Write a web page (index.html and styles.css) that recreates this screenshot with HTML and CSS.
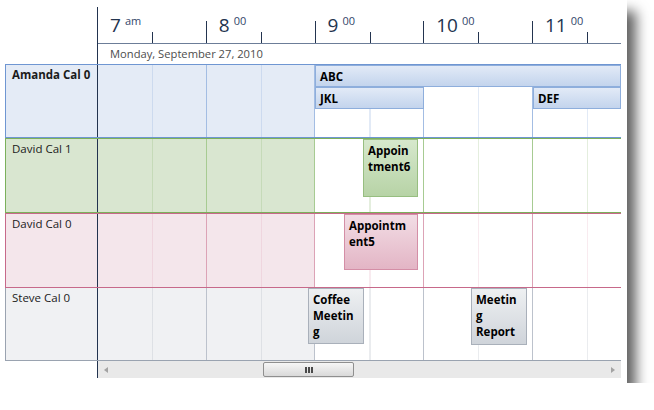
FILE: index.html
```html
<!DOCTYPE html>
<html>
<head>
    <meta name="viewport" content="width=device-width, initial-scale=1">
    <title>Scheduler</title>
    <link rel="stylesheet" href="styles.css">
</head>
<body>
    <div class="window">
        <div class="scheduler">
            <div class="band">
                <div class="corner"></div>
                <div class="ruler-wrap">
                    <div class="ruler">
                        <div class="hour"><span class="num">7</span><sup>am</sup></div>
                        <div class="hour"><span class="num">8</span><sup>00</sup></div>
                        <div class="hour"><span class="num">9</span><sup>00</sup></div>
                        <div class="hour"><span class="num">10</span><sup>00</sup></div>
                        <div class="hour"><span class="num">11</span><sup>00</sup></div>
                    </div>
                    <div class="date">Monday, September 27, 2010</div>
                </div>
            </div>

            <div class="row blue">
                <div class="row-head"><b>Amanda Cal 0</b></div>
                <div class="lane">
                    <div class="appt" style="left: 217px; top: 0; width: 306px; height: 22px;">ABC</div>
                    <div class="appt" style="left: 217px; top: 22px; width: 109px; height: 22px;">JKL</div>
                    <div class="appt" style="left: 435px; top: 22px; width: 88px; height: 22px;">DEF</div>
                </div>
            </div>

            <div class="row green">
                <div class="row-head">David Cal 1</div>
                <div class="lane">
                    <div class="appt" style="left: 265px; top: 0; width: 55px; height: 58px;">Appoin<br>tment6</div>
                </div>
            </div>

            <div class="row pink">
                <div class="row-head">David Cal 0</div>
                <div class="lane">
                    <div class="appt" style="left: 246px; top: 0; width: 74px; height: 56px;">Appointm<br>ent5</div>
                </div>
            </div>

            <div class="row gray last">
                <div class="row-head">Steve Cal 0</div>
                <div class="lane">
                    <div class="appt" style="left: 210px; top: 0; width: 56px; height: 56px;">Coffee<br>Meetin<br>g</div>
                    <div class="appt" style="left: 373px; top: 0; width: 56px; height: 57px;">Meetin<br>g<br>Report</div>
                </div>
            </div>

            <div class="band">
                <div class="corner"></div>
                <div class="scrollbar">
                    <span class="arrow left"></span>
                    <div class="thumb"><span class="grip"></span></div>
                    <span class="arrow right"></span>
                </div>
            </div>
        </div>
    </div>
</body>
</html>
```

FILE: styles.css
```css
body {
    margin: 0;
    background: #fff;
    font-family: "Open Sans", "Noto Sans", sans-serif;
    color: #1b1b1b;
}

.window {
    width: 627px;
    height: 383px;
    box-sizing: border-box;
    padding: 7px 0 0 5px;
    background: #fff;
    box-shadow: 9px 11px 12px rgba(0, 0, 0, 0.62);
}

.scheduler {
    width: 616px;
}

.band {
    display: flex;
}

.corner {
    flex: none;
    width: 92px;
}

/* --- time ruler --- */
.ruler-wrap {
    flex: 1;
    min-width: 0;
    border-left: 1px solid #22334f;
}

.ruler {
    display: flex;
    height: 36px;
    overflow: hidden;
    border-bottom: 1px solid #6c7d98;
}

.hour {
    flex: 0 0 108.75px;
    box-sizing: border-box;
    padding: 6px 0 0 12px;
    color: #23344f;
    background:
        linear-gradient(#23344f, #23344f) 54px 100% / 1px 11px no-repeat,
        linear-gradient(#23344f, #23344f) 100% 100% / 1px 22px no-repeat;
}

.num {
    font-size: 19px;
    line-height: 24px;
}

.hour sup {
    font-size: 11px;
    line-height: 0;
    vertical-align: 7px;
    margin-left: 4px;
    color: #34466a;
}

.date {
    height: 20px;
    padding-left: 12px;
    font-size: 11.2px;
    line-height: 20px;
    color: #4d4d4d;
}

/* --- resource rows --- */
.row {
    display: flex;
    box-sizing: border-box;
    height: 75px;
    border-top: 1px solid var(--line);
    border-bottom: 1px solid var(--line);
}

.row.blue {
    height: 74px;
}

.row.last {
    height: 73px;
    border-top: 0;
}

.blue {
    --line: #6f96d2;
    --shade: #e4ebf6;
    --hour: #a3bde3;
    --half: rgba(110, 150, 210, 0.2);
    --appt-top: #e2eaf7;
    --appt-bottom: #c3d4ed;
    --appt-border: #8eaedc;
}

.green {
    --line: #7bb05b;
    --shade: #d9e6d0;
    --hour: #a7cb92;
    --half: rgba(120, 170, 90, 0.2);
    --appt-top: #d6e8cc;
    --appt-bottom: #b7d3a6;
    --appt-border: #97be80;
}

.pink {
    --line: #c7698a;
    --shade: #f4e6eb;
    --hour: #dca3b6;
    --half: rgba(210, 120, 150, 0.15);
    --appt-top: #f2dde5;
    --appt-bottom: #e3b5c5;
    --appt-border: #d48ea6;
}

.gray {
    --line: #9aa3b0;
    --shade: #f0f1f3;
    --hour: #bcc2cc;
    --half: rgba(140, 150, 165, 0.18);
    --appt-top: #eef0f2;
    --appt-bottom: #cfd4da;
    --appt-border: #a9b0ba;
}

.row-head {
    flex: none;
    width: 92px;
    box-sizing: border-box;
    padding: 2px 6px;
    border-left: 1px solid var(--line);
    background: var(--shade);
    font-size: 11.5px;
    line-height: 16px;
}

.lane {
    position: relative;
    flex: 1;
    overflow: hidden;
    border-left: 1px solid #22334f;
    background:
        repeating-linear-gradient(90deg, transparent 0 54px, var(--half) 54px 55px, transparent 55px 107.75px, var(--hour) 107.75px 108.75px),
        linear-gradient(90deg, var(--shade) 0 217px, #fff 217px);
}

.appt {
    position: absolute;
    box-sizing: border-box;
    padding: 3px 4px;
    border: 1px solid var(--appt-border);
    background: linear-gradient(var(--appt-top), var(--appt-bottom));
    font-size: 11.5px;
    font-weight: bold;
    line-height: 16px;
    color: #000;
    white-space: nowrap;
}

/* --- horizontal scrollbar --- */
.scrollbar {
    flex: 1;
    display: flex;
    align-items: center;
    height: 17px;
    border-left: 1px solid #22334f;
    background: #e9e9e9;
}

.arrow {
    width: 0;
    height: 0;
    border-top: 3px solid transparent;
    border-bottom: 3px solid transparent;
}

.arrow.left {
    margin-left: 6px;
    border-right: 4px solid #a3a3a3;
}

.arrow.right {
    margin-left: auto;
    margin-right: 6px;
    border-left: 4px solid #a3a3a3;
}

.thumb {
    display: flex;
    align-items: center;
    justify-content: center;
    box-sizing: border-box;
    width: 91px;
    height: 15px;
    margin-left: 155px;
    border: 1px solid #8f8f8f;
    border-radius: 2px;
    background: linear-gradient(#f6f6f6, #d9d9d9);
}

.grip {
    width: 8px;
    height: 6px;
    background: repeating-linear-gradient(90deg, #4a4a4a 0 2px, transparent 2px 3px);
}
```
